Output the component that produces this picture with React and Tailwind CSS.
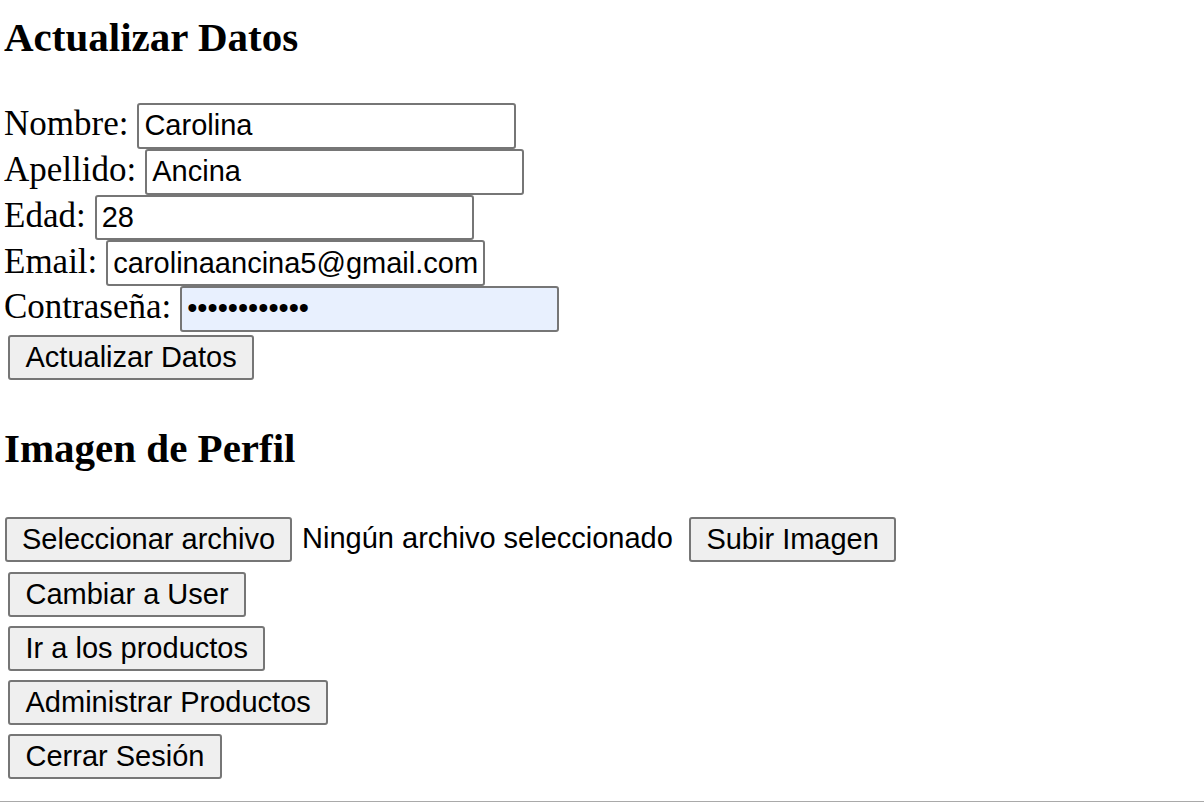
import React from "react";

const serif = "font-['Liberation_Serif','Times_New_Roman',serif]";
const sans = "font-['Liberation_Sans',Arial,sans-serif]";

function Row({ label, value, type = "text", extra = "" }) {
  return (
    <div className="flex items-baseline gap-[9px]">
      <span className={`${serif} text-[35px] leading-none text-black`}>{label}</span>
      <input
        type={type}
        defaultValue={value}
        readOnly
        className={`${sans} text-[29px] text-black h-[45.75px] w-[379px] border-2 border-[#767676] rounded-[3px] px-[5px] outline-none ${extra}`}
      />
    </div>
  );
}

function Btn({ children, extra = "" }) {
  return (
    <button
      type="button"
      className={`${sans} text-[29px] text-black h-[45px] px-[15.5px] bg-[#efefef] border-2 border-[#767676] rounded-[3px] leading-none self-start ${extra}`}
    >
      {children}
    </button>
  );
}

export default function App() {
  return (
    <div className="flex flex-col h-[802px] bg-white pl-[4px] pt-[14px] overflow-hidden">
      <h3 className={`${serif} text-[41px] leading-[47px] font-bold text-black`}>Actualizar Datos</h3>
      <div className="flex flex-col mt-[42px]">
        <Row label="Nombre:" value="Carolina" />
        <Row label="Apellido:" value="Ancina" />
        <Row label="Edad:" value="28" />
        <Row label="Email:" value="carolinaancina5@gmail.com" />
        <Row label="Contraseña:" value="carolina1234" type="password" extra="bg-[#e8f0fe]" />
      </div>
      <Btn extra="mt-[3.25px] ml-[4px]">Actualizar Datos</Btn>
      <h3 className={`${serif} text-[41px] leading-[47px] font-bold text-black mt-[45px]`}>Imagen de Perfil</h3>
      <div className="flex items-baseline mt-[45px] ml-[1px]">
        <Btn extra="px-[15px]">Seleccionar archivo</Btn>
        <span className={`${sans} text-[29px] text-black ml-[10px]`}>Ningún archivo seleccionado</span>
        <Btn extra="ml-[16px]">Subir Imagen</Btn>
      </div>
      <div className="flex flex-col gap-[9px] mt-[10px] ml-[4px]">
        <Btn>Cambiar a User</Btn>
        <Btn>Ir a los productos</Btn>
        <Btn>Administrar Productos</Btn>
        <Btn>Cerrar Sesión</Btn>
      </div>
      <div className="mt-auto -ml-[4px] h-px bg-[#a9a9a9]" />
    </div>
  );
}
